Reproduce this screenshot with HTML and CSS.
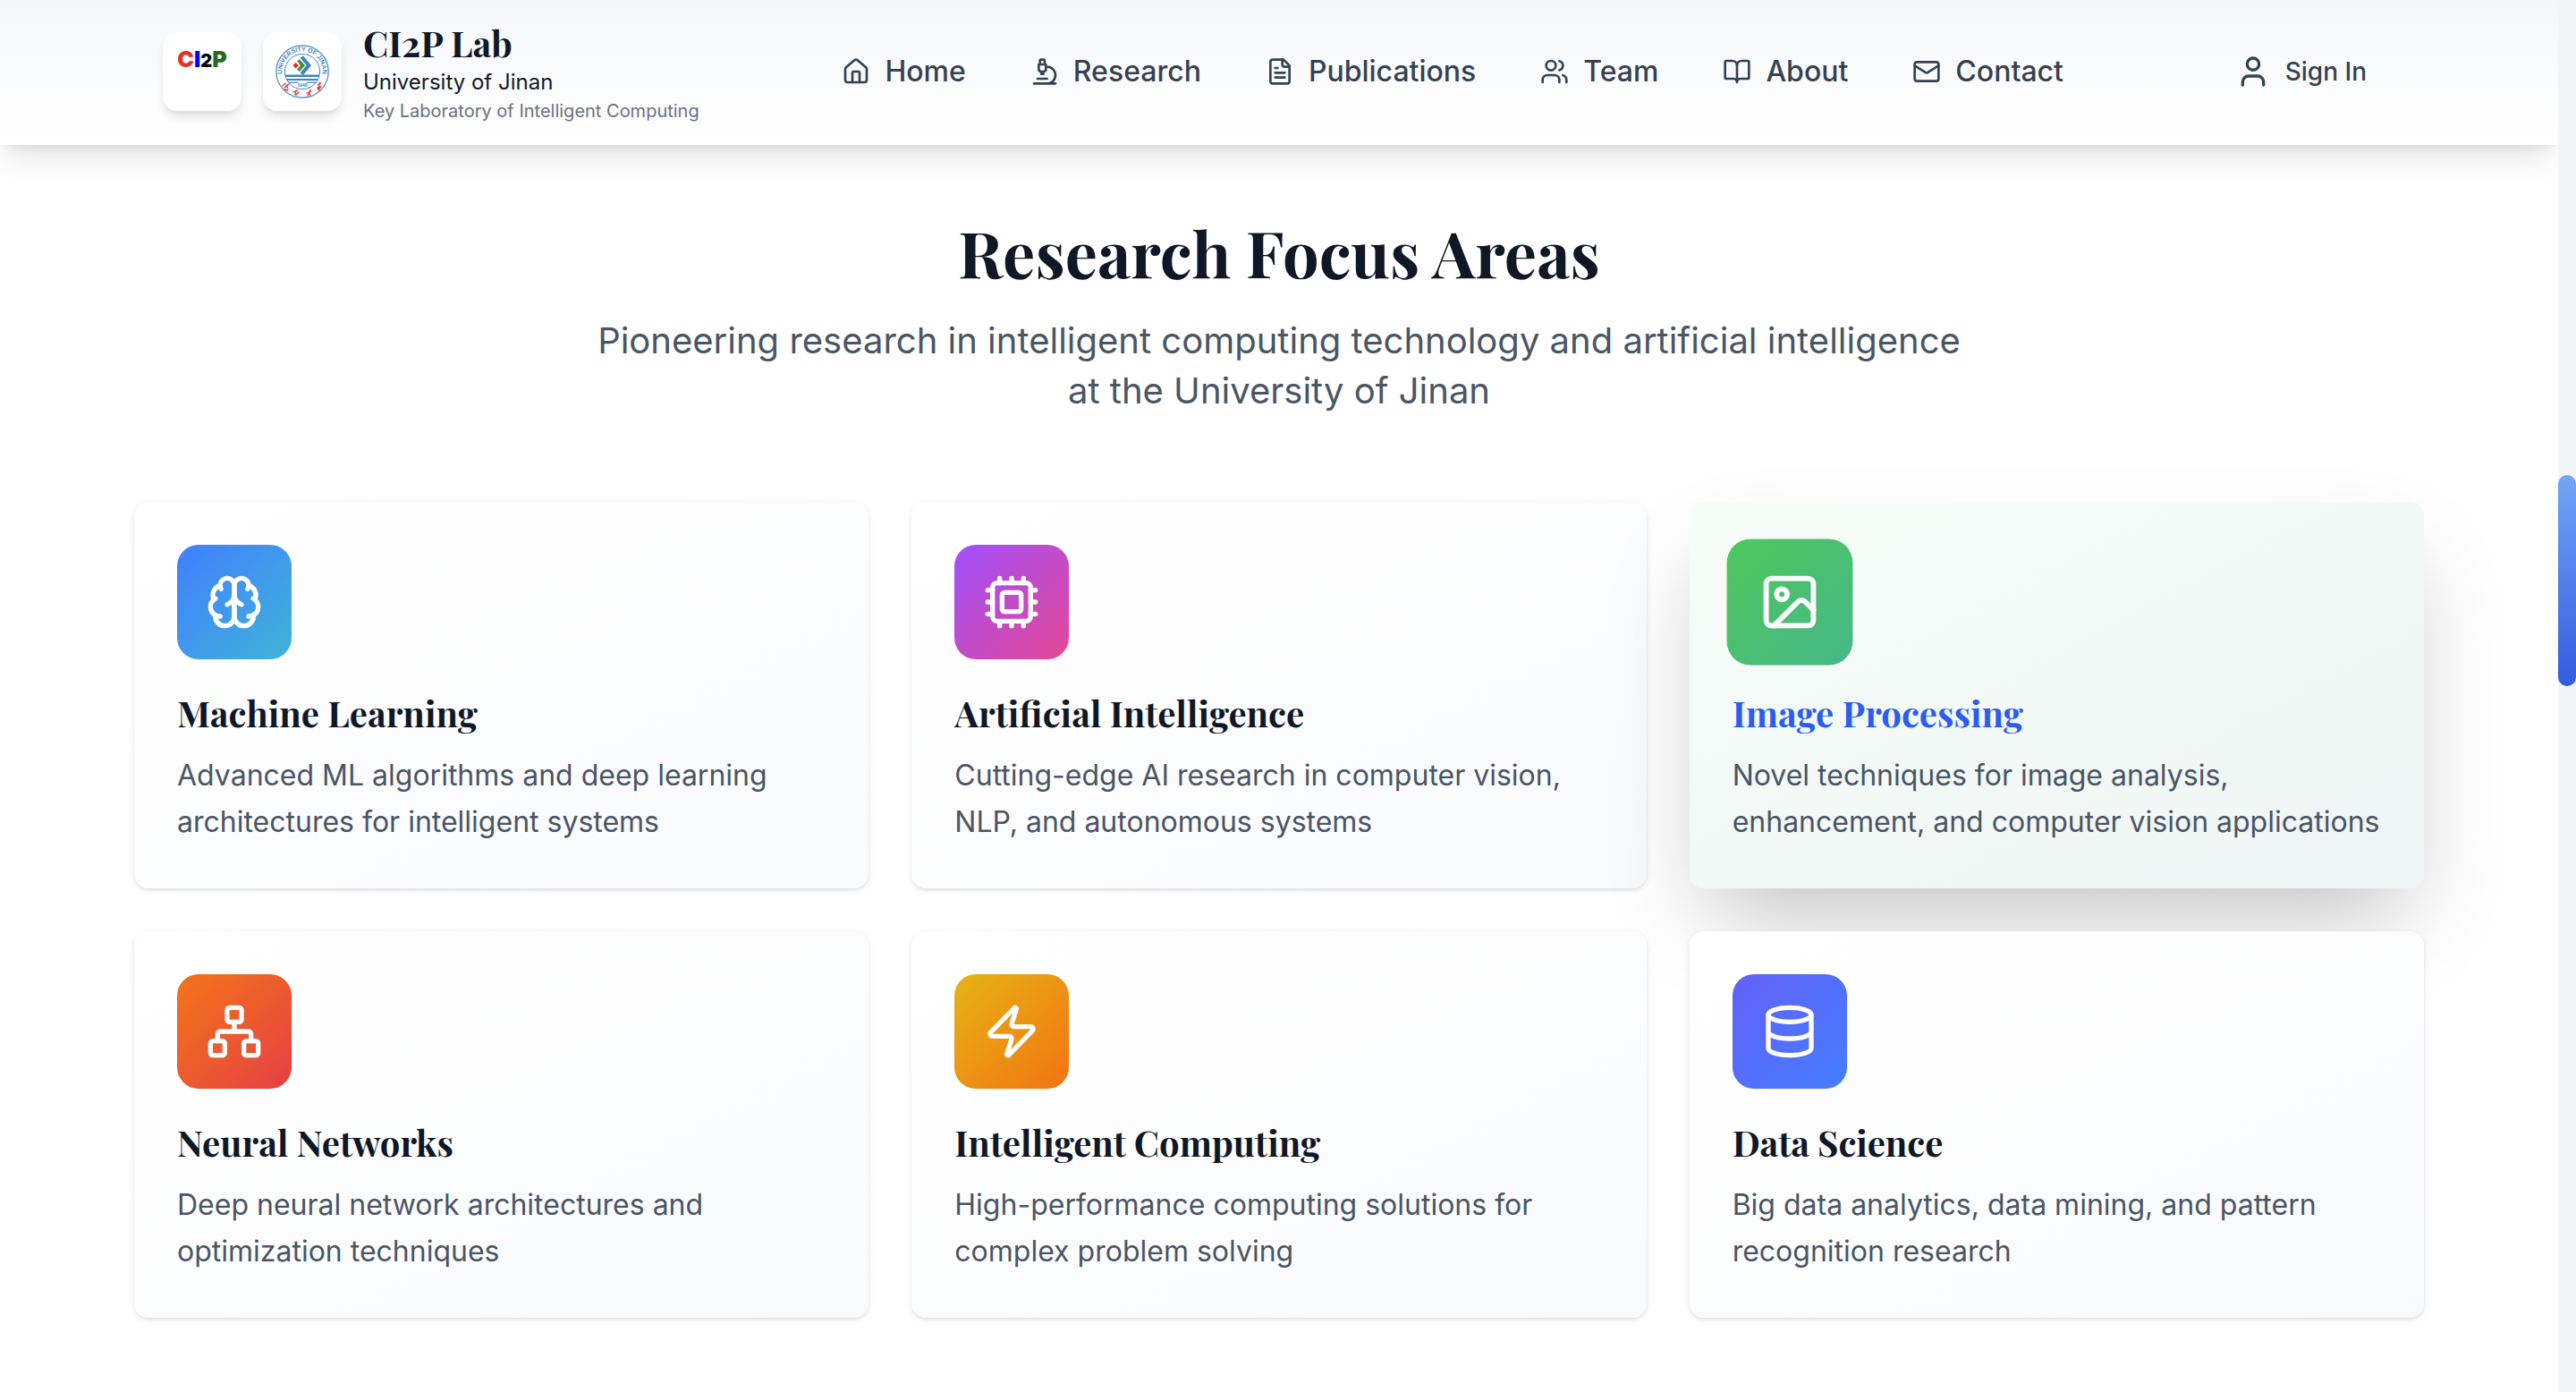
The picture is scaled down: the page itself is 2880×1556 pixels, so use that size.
FILE: index.html
```html
<!DOCTYPE html>
<html lang="en">
<head>
<meta charset="utf-8">
<title>CI2P Lab - University of Jinan</title>
<meta name="viewport" content="width=device-width, initial-scale=1">
<link rel="stylesheet" href="styles.css">
</head>
<body>
<header class="site-header">
  <div class="header-inner">
    <a class="brand" href="#">
      <span class="logo logo-lab" aria-hidden="true"><b class="c">C</b><b class="i">I</b><b class="two">2</b><b class="p">P</b></span>
      <span class="logo">
        <svg class="emblem" viewBox="0 0 60 60" role="img" aria-label="University of Jinan emblem">
          <defs><path id="ring" d="M8.6 37.5A22.7 22.7 0 1 1 51.4 37.5"/></defs>
          <g fill="none" stroke="#3f86bd">
            <circle cx="30" cy="30" r="29.2" stroke-width="1.2"/>
            <circle cx="30" cy="30" r="19.6" stroke-width="1"/>
          </g>
          <text class="emblem-name"><textPath href="#ring" startOffset="50%" text-anchor="middle">UNIVERSITY OF JINAN</textPath></text>
          <path d="M27.5 14.5 31 12.500 40 23 31 34 27.500 31.500 34.500 23Z" fill="#3f86bd"/>
          <path d="M24 18 27 16.500 33 23 27 30 24 28 28 23Z" fill="#4d8b32"/>
          <path d="M22.500 20 26 23 22.500 26.500 19.500 23Z" fill="#e02f25"/>
          <path d="M11 33.500h38v2.500H11ZM12.500 38h35v2h-35ZM14.500 41.500h11v1.200h-11ZM34.500 41.500h11v1.200h-11Z" fill="#3f86bd"/>
          <text class="emblem-year" x="30" y="47" text-anchor="middle">1948</text>
          <g fill="none" stroke="#dd3a30" stroke-width="1.300" stroke-linecap="round">
            <path d="m8 46 3-3m-1 5 5-4m-5 6 4 1m-2-6 2 4"/>
            <path d="m20 53 5-2m-3 5 1-5m0 5 3-3"/>
            <path d="m35 54 5-2m-1-2-3 7m2-3 1 3"/>
            <path d="m47 45 4-2m-4 5 4-1m-2-5 0 9m-2-1 3-2"/>
          </g>
        </svg>
      </span>
      <span class="brand-text">
        <span class="brand-name">CI2P Lab</span>
        <span class="brand-university">University of Jinan</span>
        <span class="brand-key">Key Laboratory of Intelligent Computing</span>
      </span>
    </a>
    <nav class="nav" aria-label="Main">
      <a href="#"><svg class="icon" viewBox="0 0 24 24"><path d="M15 21v-8a1 1 0 0 0-1-1h-4a1 1 0 0 0-1 1v8"/><path d="M3 10a2 2 0 0 1 .709-1.528l7-5.999a2 2 0 0 1 2.582 0l7 5.999A2 2 0 0 1 21 10v9a2 2 0 0 1-2 2H5a2 2 0 0 1-2-2z"/></svg>Home</a>
      <a href="#"><svg class="icon" viewBox="0 0 24 24"><path d="M6 18h8M3 22h18M14 22a7 7 0 1 0 0-14h-1M9 14h2M9 12a2 2 0 0 1-2-2V6h6v4a2 2 0 0 1-2 2ZM12 6V3a1 1 0 0 0-1-1H9a1 1 0 0 0-1 1v3"/></svg>Research</a>
      <a href="#"><svg class="icon" viewBox="0 0 24 24"><path d="M15 2H6a2 2 0 0 0-2 2v16a2 2 0 0 0 2 2h12a2 2 0 0 0 2-2V7Z"/><path d="M14 2v4a2 2 0 0 0 2 2h4M10 9H8M16 13H8M16 17H8"/></svg>Publications</a>
      <a href="#"><svg class="icon" viewBox="0 0 24 24"><path d="M16 21v-2a4 4 0 0 0-4-4H6a4 4 0 0 0-4 4v2"/><circle cx="9" cy="7" r="4"/><path d="M22 21v-2a4 4 0 0 0-3-3.870M16 3.130a4 4 0 0 1 0 7.750"/></svg>Team</a>
      <a href="#"><svg class="icon" viewBox="0 0 24 24"><path d="M12 7v14M3 18a1 1 0 0 1-1-1V4a1 1 0 0 1 1-1h5a4 4 0 0 1 4 4 4 4 0 0 1 4-4h5a1 1 0 0 1 1 1v13a1 1 0 0 1-1 1h-6a3 3 0 0 0-3 3 3 3 0 0 0-3-3z"/></svg>About</a>
      <a href="#"><svg class="icon" viewBox="0 0 24 24"><rect width="20" height="16" x="2" y="4" rx="2"/><path d="m22 7-8.970 5.700a1.940 1.940 0 0 1-2.060 0L2 7"/></svg>Contact</a>
    </nav>
    <button class="sign-in" type="button"><svg class="icon" viewBox="0 0 24 24"><path d="M19 21v-2a4 4 0 0 0-4-4H9a4 4 0 0 0-4 4v2"/><circle cx="12" cy="7" r="4"/></svg>Sign In</button>
  </div>
</header>

<main class="section">
  <div class="section-head">
    <h1>Research Focus Areas</h1>
    <p>Pioneering research in intelligent computing technology and artificial intelligence at the University of Jinan</p>
  </div>
  <div class="cards">
    <article class="card">
      <div class="tile tile-blue"><svg class="icon" viewBox="0 0 24 24"><path d="M12 5a3 3 0 1 0-5.997.125 4 4 0 0 0-2.526 5.770 4 4 0 0 0 .556 6.588A4 4 0 1 0 12 18Z"/><path d="M12 5a3 3 0 1 1 5.997.125 4 4 0 0 1 2.526 5.770 4 4 0 0 1-.556 6.588A4 4 0 1 1 12 18Z"/><path d="M15 13a4.500 4.500 0 0 1-3-4 4.500 4.500 0 0 1-3 4M17.599 6.500a3 3 0 0 0 .399-1.375M6.003 5.125A3 3 0 0 0 6.401 6.500M3.477 10.896a4 4 0 0 1 .585-.396M19.938 10.500a4 4 0 0 1 .585.396M6 18a4 4 0 0 1-1.967-.516M19.967 17.484A4 4 0 0 1 18 18"/></svg></div>
      <h2>Machine Learning</h2>
      <p>Advanced ML algorithms and deep learning architectures for intelligent systems</p>
    </article>
    <article class="card">
      <div class="tile tile-purple"><svg class="icon" viewBox="0 0 24 24"><rect width="16" height="16" x="4" y="4" rx="2"/><rect width="8" height="8" x="8" y="8" rx="1"/><path d="M12 20v2M12 2v2M17 20v2M17 2v2M2 12h2M2 17h2M2 7h2M20 12h2M20 17h2M20 7h2M7 20v2M7 2v2"/></svg></div>
      <h2>Artificial Intelligence</h2>
      <p>Cutting-edge AI research in computer vision, NLP, and autonomous systems</p>
    </article>
    <article class="card card-active">
      <div class="tile tile-green"><svg class="icon" viewBox="0 0 24 24"><rect width="18" height="18" x="3" y="3" rx="2"/><circle cx="9" cy="9" r="2"/><path d="m21 15-3.086-3.086a2 2 0 0 0-2.828 0L6 21"/></svg></div>
      <h2>Image Processing</h2>
      <p>Novel techniques for image analysis, enhancement, and computer vision applications</p>
    </article>
    <article class="card">
      <div class="tile tile-orange"><svg class="icon" viewBox="0 0 24 24"><rect x="16" y="16" width="6" height="6" rx="1"/><rect x="2" y="16" width="6" height="6" rx="1"/><rect x="9" y="2" width="6" height="6" rx="1"/><path d="M5 16v-3a1 1 0 0 1 1-1h12a1 1 0 0 1 1 1v3M12 12V8"/></svg></div>
      <h2>Neural Networks</h2>
      <p>Deep neural network architectures and optimization techniques</p>
    </article>
    <article class="card">
      <div class="tile tile-yellow"><svg class="icon" viewBox="0 0 24 24"><path d="M4 14a1 1 0 0 1-.780-1.630l9.900-10.200a.5.5 0 0 1 .860.460l-1.920 6.020A1 1 0 0 0 13 10h7a1 1 0 0 1 .780 1.630l-9.900 10.200a.5.5 0 0 1-.860-.460l1.920-6.020A1 1 0 0 0 11 14z"/></svg></div>
      <h2>Intelligent Computing</h2>
      <p>High-performance computing solutions for complex problem solving</p>
    </article>
    <article class="card">
      <div class="tile tile-indigo"><svg class="icon" viewBox="0 0 24 24"><ellipse cx="12" cy="5" rx="9" ry="3"/><path d="M3 5v14a9 3 0 0 0 18 0V5M3 12a9 3 0 0 0 18 0"/></svg></div>
      <h2>Data Science</h2>
      <p>Big data analytics, data mining, and pattern recognition research</p>
    </article>
  </div>
</main>
<div class="scroll-track" aria-hidden="true"><div class="scroll-thumb"></div></div>
</body>
</html>
```

FILE: styles.css
```css
:root {
  --ink: #101828;
  --slate: #364153;
  --body: #4a5565;
  --muted: #6a7282;
  --sans: Inter, "Liberation Sans", sans-serif;
  --display: "Playfair Display", "Liberation Serif", serif;
  --scrollbar: 20px;
}

* { box-sizing: border-box; }

html { overflow: hidden; }

body {
  margin: 0;
  padding-right: var(--scrollbar);
  background: #fff;
  color: var(--ink);
  font-family: var(--sans);
}

h1, h2, p { margin: 0; }

.icon {
  display: block;
  flex: none;
  width: 32px;
  height: 32px;
  fill: none;
  stroke: currentColor;
  stroke-width: 2;
  stroke-linecap: round;
  stroke-linejoin: round;
}

/* Header */
.site-header {
  position: relative;
  border-bottom: 2px solid #fff;
  background: linear-gradient(#f5f7f9, #fff);
  box-shadow: 0 20px 30px -6px rgb(0 0 0 / .1), 0 8px 12px -8px rgb(0 0 0 / .1);
}

.header-inner {
  display: flex;
  align-items: center;
  justify-content: space-between;
  max-width: 2560px;
  min-height: 160px;
  margin: 0 auto;
  padding: 0 32px;
}

.brand {
  display: flex;
  align-items: center;
  gap: 24px;
  color: inherit;
  text-decoration: none;
}

.logo {
  display: flex;
  align-items: center;
  justify-content: center;
  width: 88px;
  height: 88px;
  border-radius: 16px;
  background: #fff;
  box-shadow: 0 8px 12px -2px rgb(0 0 0 / .1), 0 4px 8px -4px rgb(0 0 0 / .1);
}

.logo-lab {
  align-items: baseline;
  padding-top: 16px;
  font: 900 25px/28px var(--sans);
}

.logo-lab b { font-weight: 900; }
.c { color: #e5322b; }
.i { color: #00f; }
.two { color: #000; font-size: 20px; }
.p { color: #256b1b; }

.emblem { width: 60px; height: 60px; }
.emblem-name { fill: #3f86bd; font: 700 7px "Liberation Sans", sans-serif; }
.emblem-year { fill: #3f86bd; font: 700 5px "Liberation Sans", sans-serif; }

.brand-text { display: flex; flex-direction: column; white-space: nowrap; }

.brand-name { font: 700 40px/56px var(--display); }
.brand-university { font-size: 24px; line-height: 32px; }
.brand-key { color: var(--muted); font-size: 20px; line-height: 32px; }

.nav { display: flex; gap: 24px; }

.nav a {
  display: flex;
  align-items: center;
  gap: 16px;
  padding: 16px 24px;
  color: var(--slate);
  font-size: 32px;
  font-weight: 500;
  line-height: 48px;
  text-decoration: none;
}

.sign-in {
  display: flex;
  align-items: center;
  gap: 16px;
  padding: 16px 32px;
  border: 0;
  background: none;
  color: var(--slate);
  font: 500 28px/40px var(--sans);
}

.sign-in .icon { width: 40px; height: 40px; }

/* Research areas */
.section {
  max-width: 2560px;
  margin: 0 auto;
  padding: 79px 0;
}

.section-head {
  display: flex;
  flex-direction: column;
  align-items: center;
  gap: 32px;
  margin-bottom: 96px;
  text-align: center;
}

.section-head h1 {
  font: 700 72px/80px var(--display);
}

.section-head p {
  max-width: 1536px;
  color: var(--body);
  font-size: 40px;
  line-height: 56px;
}

.cards {
  display: grid;
  grid-template-columns: repeat(3, 1fr);
  gap: 48px;
}

.card {
  padding: 48px;
  border-radius: 16px;
  background: linear-gradient(to bottom right, #fff, #f9fafc);
  box-shadow: 0 2px 6px rgb(0 0 0 / .1), 0 2px 4px -2px rgb(0 0 0 / .1);
}

.card h2 {
  margin: 32px 0 16px;
  font: 700 40px/56px var(--display);
}

.card p {
  color: var(--body);
  font-size: 32px;
  line-height: 52px;
}

.card-active {
  background: linear-gradient(to bottom right, #f6fdf9, #eff5f4);
  box-shadow: 0 50px 100px -24px rgb(0 0 0 / .25);
}

.card-active h2 { color: #2b5cf6; }
.card-active .tile { transform: scale(1.1); }

.tile {
  display: grid;
  place-items: center;
  width: 128px;
  height: 128px;
  border-radius: 24px;
  color: #fff;
}

.tile .icon { width: 64px; height: 64px; }

.tile-blue { background: linear-gradient(135deg, #417eff, #40b4d8); }
.tile-purple { background: linear-gradient(135deg, #a050ff, #e44892); }
.tile-green { background: linear-gradient(135deg, #4fc75c, #45b888); }
.tile-orange { background: linear-gradient(135deg, #f37519, #e64044); }
.tile-yellow { background: linear-gradient(135deg, #e6b414, #f37313); }
.tile-indigo { background: linear-gradient(135deg, #6360f8, #447eff); }

/* Page scrollbar */
.scroll-track {
  position: fixed;
  top: 0;
  right: 0;
  bottom: 0;
  width: var(--scrollbar);
  background: #f3f4f6;
}

.scroll-thumb {
  position: absolute;
  top: 531px;
  width: 100%;
  height: 236px;
  border-radius: 10px;
  background: linear-gradient(#72a6f6, #335be0);
}
```
